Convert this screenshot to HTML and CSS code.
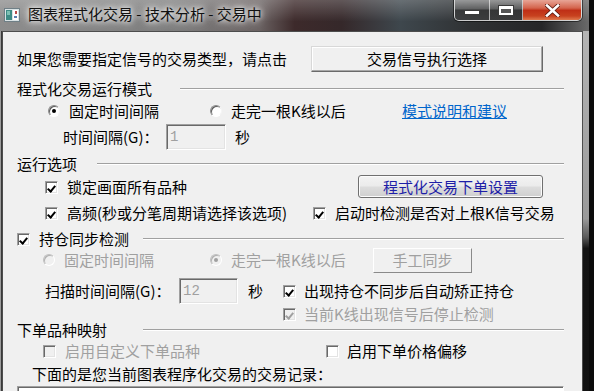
FILE: index.html
```html
<!DOCTYPE html>
<html lang="zh-CN">
    <head>
        <meta charset="UTF-8">
        <title>图表程式化交易 - 技术分析 - 交易中</title>
        <link rel="stylesheet" href="styles.css">
    </head>
    <body>
        <div class="window">
            <div class="titlebar">
                <svg class="app-icon" width="16" height="14" viewBox="0 0 16 14">
                    <rect x="0.5" y="0.5" width="15" height="13" fill="#d8e2e4" stroke="#6f7f86"/>
                    <rect x="2" y="2" width="6" height="10" fill="#3e8c86"/>
                    <rect x="3" y="3" width="3" height="4" fill="#7cc0b4"/>
                    <rect x="9" y="2" width="5" height="10" fill="#ffffff"/>
                    <rect x="11" y="3" width="2" height="3" fill="#b84a4a"/>
                    <rect x="10" y="8" width="3" height="2" fill="#5a7fb0"/>
                </svg>
                <span class="title">图表程式化交易 - 技术分析 - 交易中</span>
                <div class="caption-buttons">
                    <div class="cap cap-min"><span class="min-glyph"></span></div>
                    <div class="cap cap-max"><span class="max-glyph"></span></div>
                    <div class="cap cap-close">
                        <svg width="15" height="13" viewBox="0 0 15 13">
                            <path d="M2 1.5 L13 11.5 M13 1.5 L2 11.5" stroke="#5a1a10" stroke-width="4.2" stroke-linecap="square"/>
                            <path d="M2 1.5 L13 11.5 M13 1.5 L2 11.5" stroke="#ffffff" stroke-width="2.6" stroke-linecap="square"/>
                        </svg>
                    </div>
                </div>
            </div>

            <div class="frame">
                <div class="frame-left"></div>
                <div class="client">
                    <div class="row row-signal">
                        <span class="cell cell-signal">如果您需要指定信号的交易类型，请点击</span>
                        <button class="btn btn-signal">交易信号执行选择</button>
                    </div>

                    <div class="row group group-mode">
                        <span class="group-label label-mode">程式化交易运行模式</span>
                        <span class="group-line"></span>
                    </div>

                    <div class="row row-mode">
                        <label class="option opt-fixed"><span class="radio checked"></span>固定时间间隔</label>
                        <label class="option opt-bar"><span class="radio"></span>走完一根K线以后</label>
                        <a class="link" href="#">模式说明和建议</a>
                    </div>

                    <div class="row row-interval">
                        <span class="cell cell-interval">时间间隔(G)：</span>
                        <span class="field field-interval">1</span>
                        <span class="unit">秒</span>
                    </div>

                    <div class="row group group-run">
                        <span class="group-label label-run">运行选项</span>
                        <span class="group-line"></span>
                    </div>

                    <div class="row row-lock">
                        <label class="option opt-lock"><span class="check on"></span>锁定画面所有品种</label>
                        <button class="btn btn-themed">程式化交易下单设置</button>
                    </div>

                    <div class="row row-freq">
                        <label class="option opt-freq"><span class="check on"></span>高频(秒或分笔周期请选择该选项)</label>
                        <label class="option"><span class="check on"></span>启动时检测是否对上根K信号交易</label>
                    </div>

                    <div class="row group group-sync">
                        <label class="group-label label-sync option"><span class="check on"></span>持仓同步检测</label>
                        <span class="group-line"></span>
                    </div>

                    <div class="row row-sync-mode">
                        <label class="option off opt-sync-fixed"><span class="radio"></span>固定时间间隔</label>
                        <label class="option off opt-sync-bar"><span class="radio checked"></span>走完一根K线以后</label>
                        <button class="btn btn-manual" disabled>手工同步</button>
                    </div>

                    <div class="row row-scan">
                        <span class="cell cell-scan">扫描时间间隔(G)：</span>
                        <span class="field field-scan">12</span>
                        <span class="unit unit-scan">秒</span>
                        <label class="option tight"><span class="check on"></span>出现持仓不同步后自动矫正持仓</label>
                    </div>

                    <div class="row row-stop">
                        <label class="option off tight"><span class="check on"></span>当前K线出现信号后停止检测</label>
                    </div>

                    <div class="row group group-map">
                        <span class="group-label label-map">下单品种映射</span>
                        <span class="group-line"></span>
                    </div>

                    <div class="row row-custom">
                        <label class="option off opt-custom"><span class="check"></span>启用自定义下单品种</label>
                        <label class="option tight"><span class="check"></span>启用下单价格偏移</label>
                    </div>

                    <div class="row row-records">
                        <span>下面的是您当前图表程序化交易的交易记录：</span>
                    </div>

                    <div class="records"></div>
                </div>
                <div class="frame-right"></div>
            </div>
        </div>
    </body>
</html>
```

FILE: styles.css
```css
* {
    box-sizing: border-box;
}

html, body {
    margin: 0;
    padding: 0;
}

body {
    width: 594px;
    height: 391px;
    overflow: hidden;
    background-color: #0b0b0b;
    font-family: "Noto Sans CJK SC", sans-serif;
    font-size: 15px;
    color: #000;
}

.window {
    width: 589px;
    height: 391px;
    display: flex;
    flex-direction: column;
}

/* title bar (aero glass over a dark wallpaper) */
.titlebar {
    height: 31px;
    flex: none;
    display: flex;
    align-items: flex-start;
    background:
        linear-gradient(180deg, rgba(255, 255, 255, 0.22), rgba(255, 255, 255, 0) 70%),
        linear-gradient(90deg, #8d8d8d 0%, #7c7c7c 30%, #6a6262 44%, #3d2a2b 50%, #35282a 58%, #3e474d 68%, #2f3133 80%, #262628 92%, #6a6a6a 100%);
}

.app-icon {
    margin: 8px 0 0 4px;
    flex: none;
}

.title {
    margin: 4px 0 0 8px;
    font-size: 15px;
    line-height: 20px;
    color: #111;
    white-space: nowrap;
    text-shadow: 0 0 5px #fff, 0 0 9px rgba(255, 255, 255, 0.85), 0 0 14px rgba(255, 255, 255, 0.6);
}

.caption-buttons {
    margin-left: auto;
    margin-right: 7px;
    display: flex;
    height: 21px;
    border: 1px solid rgba(255, 255, 255, 0.75);
    border-top: none;
    border-radius: 0 0 5px 5px;
    overflow: hidden;
    box-shadow: 0 0 0 1px rgba(0, 0, 0, 0.5);
}

.cap {
    height: 100%;
    display: flex;
    align-items: center;
    justify-content: center;
}

.cap-min,
.cap-max {
    background: linear-gradient(180deg, rgba(200, 200, 200, 0.55) 0%, rgba(120, 120, 120, 0.45) 45%, rgba(40, 40, 40, 0.55) 50%, rgba(70, 70, 70, 0.5) 100%);
    border-right: 1px solid rgba(255, 255, 255, 0.6);
}

.cap-min {
    width: 35px;
    align-items: flex-end;
    padding-bottom: 5px;
}

.cap-max {
    width: 33px;
}

.cap-close {
    width: 58px;
    background: linear-gradient(180deg, #e8a596 0%, #d4644d 40%, #bf2f16 52%, #c8421f 80%, #df7a4e 100%);
}

.min-glyph {
    width: 16px;
    height: 5px;
    background-color: #fff;
    border: 1px solid #3a3a3a;
}

.max-glyph {
    width: 16px;
    height: 11px;
    margin-top: 1px;
    border: 1px solid #3a3a3a;
    box-shadow: inset 0 0 0 2px #fff, inset 0 3px 0 #fff;
    background-color: #555;
}

/* window frame + client area */
.frame {
    flex: 1;
    display: flex;
}

.frame-left {
    width: 2px;
    background: linear-gradient(90deg, #9c9c9c 0 1px, #3a3a3a 1px);
}

.client {
    width: 581px;
    background-color: #f0f0f0;
    border: 1px solid #4d4d4d;
    border-bottom: none;
    padding: 13px 18px 0 14px;
    display: flex;
    flex-direction: column;
}

.frame-right {
    flex: 1;
    background: linear-gradient(180deg, #b4b4b4 0%, #9a9a9a 50%, #5a5a5a 55%, #141414 58%, #111 100%);
}

/* rows */
.row {
    display: flex;
    align-items: center;
    flex: none;
    white-space: nowrap;
    line-height: 18px;
}

.row-signal    { height: 28px; }
.group-mode    { height: 18px; margin-top: 7px; }
.row-mode      { height: 20px; margin-top: 3px; padding-left: 31px; }
.row-interval  { height: 26px; margin-top: 3px; padding-left: 46px; }
.group-run     { height: 18px; margin-top: 5px; }
.row-lock      { height: 24px; margin-top: 2px; padding-left: 28px; }
.row-freq      { height: 20px; margin-top: 4px; padding-left: 28px; }
.group-sync    { height: 16px; margin-top: 8px; }
.row-sync-mode { height: 26px; padding-left: 26px; }
.row-scan      { height: 26px; margin-top: 5px; padding-left: 28px; }
.row-stop      { height: 16px; margin-top: 2px; padding-left: 266px; }
.group-map     { height: 16px; }
.row-custom    { height: 20px; margin-top: 3px; padding-left: 26px; }
.row-records   { height: 20px; margin-top: 3px; padding-left: 15px; }

.cell,
.option,
.group-label {
    flex: none;
}

.cell-signal   { width: 294px; }
.cell-interval { width: 103px; }
.cell-scan     { width: 134px; }

.label-mode { width: 163px; }
.label-run  { width: 80px; }
.label-sync { width: 126px; }
.label-map  { width: 126px; }

.opt-fixed      { width: 162px; }
.opt-bar        { width: 192px; }
.opt-lock       { width: 313px; }
.opt-freq       { width: 268px; }
.opt-sync-fixed { width: 167px; }
.opt-sync-bar   { width: 163px; }
.opt-custom     { width: 283px; }

.group-line {
    flex: 1;
    height: 2px;
    border-top: 1px solid #a0a0a0;
    border-bottom: 1px solid #fff;
}

.option {
    display: flex;
    align-items: center;
    gap: 9px;
}

.option.tight {
    gap: 8px;
}

.option.off {
    color: #a0a0a0;
}

/* classic sunken checkbox */
.check {
    width: 13px;
    height: 13px;
    flex: none;
    border: 1px solid;
    border-color: #a0a0a0 #fff #fff #a0a0a0;
    box-shadow: inset 1px 1px 0 #696969, inset -1px -1px 0 #e3e3e3;
    background-color: #fff;
    position: relative;
}

.check.on::after {
    content: "";
    position: absolute;
    left: 3px;
    top: 2px;
    width: 3px;
    height: 6px;
    border: solid #000;
    border-width: 0 2px 2px 0;
    transform: rotate(40deg);
}

.off .check {
    background-color: #f0f0f0;
}

.off .check.on::after {
    border-color: #a0a0a0;
}

/* classic radio */
.radio {
    width: 12px;
    height: 12px;
    flex: none;
    border-radius: 50%;
    border: 1px solid;
    border-color: #8a8a8a #f4f4f4 #fff #8a8a8a;
    box-shadow: inset 1px 1px 0 #5a5a5a;
    background-color: #fff;
    position: relative;
}

.radio.checked::after {
    content: "";
    position: absolute;
    left: 3px;
    top: 3px;
    width: 4px;
    height: 4px;
    border-radius: 50%;
    background-color: #000;
}

.off .radio {
    background-color: #f0f0f0;
    border-color: #c0c0c0 #fff #fff #c0c0c0;
    box-shadow: inset 1px 1px 0 #b0b0b0;
}

.off .radio.checked::after {
    background-color: #a0a0a0;
}

/* disabled edit boxes */
.field {
    flex: none;
    height: 26px;
    padding: 3px 0 0 3px;
    border: 1px solid;
    border-color: #a0a0a0 #fff #fff #a0a0a0;
    box-shadow: inset 1px 1px 0 #696969, inset -1px -1px 0 #e3e3e3;
    background-color: #f0f0f0;
    color: #a0a0a0;
    font-family: "Liberation Mono", monospace;
    font-size: 14px;
    line-height: 18px;
}

.field-interval { width: 60px; }
.field-scan     { width: 59px; }

.unit {
    margin-left: 9px;
}

.unit.unit-scan {
    width: 45px;
    margin-left: 0;
    padding-left: 10px;
}

.link {
    color: #0066cc;
    text-decoration: underline;
}

/* buttons */
.btn {
    flex: none;
    font-family: inherit;
    font-size: 15px;
    line-height: 18px;
    padding: 0;
    color: #000;
    background-color: #f0f0f0;
    border: 1px solid;
    border-color: #d8d8d8 #6a6a6a #6a6a6a #d8d8d8;
    box-shadow: inset -1px -1px 0 #a8a8a8, inset 1px 1px 0 #fff;
}

.btn-signal {
    width: 232px;
    height: 26px;
}

.btn-themed {
    width: 185px;
    height: 23px;
    margin-top: -1px;
    color: #1e1ea8;
    border: 1px solid #707070;
    border-radius: 3px;
    box-shadow: inset 0 0 0 1px #fcfcfc;
    background: linear-gradient(180deg, #f3f3f3 0%, #ebebeb 48%, #dddddd 52%, #cfcfcf 100%);
}

.btn-manual {
    width: 99px;
    height: 25px;
    color: #a0a0a0;
    border-color: #fff #8a8a8a #8a8a8a #fff;
    box-shadow: none;
}

.records {
    flex: none;
    margin-top: 2px;
    height: 20px;
    background-color: #fff;
    border: 1px solid;
    border-color: #a0a0a0 #fff #fff #a0a0a0;
    box-shadow: inset 1px 1px 0 #696969;
}
```
